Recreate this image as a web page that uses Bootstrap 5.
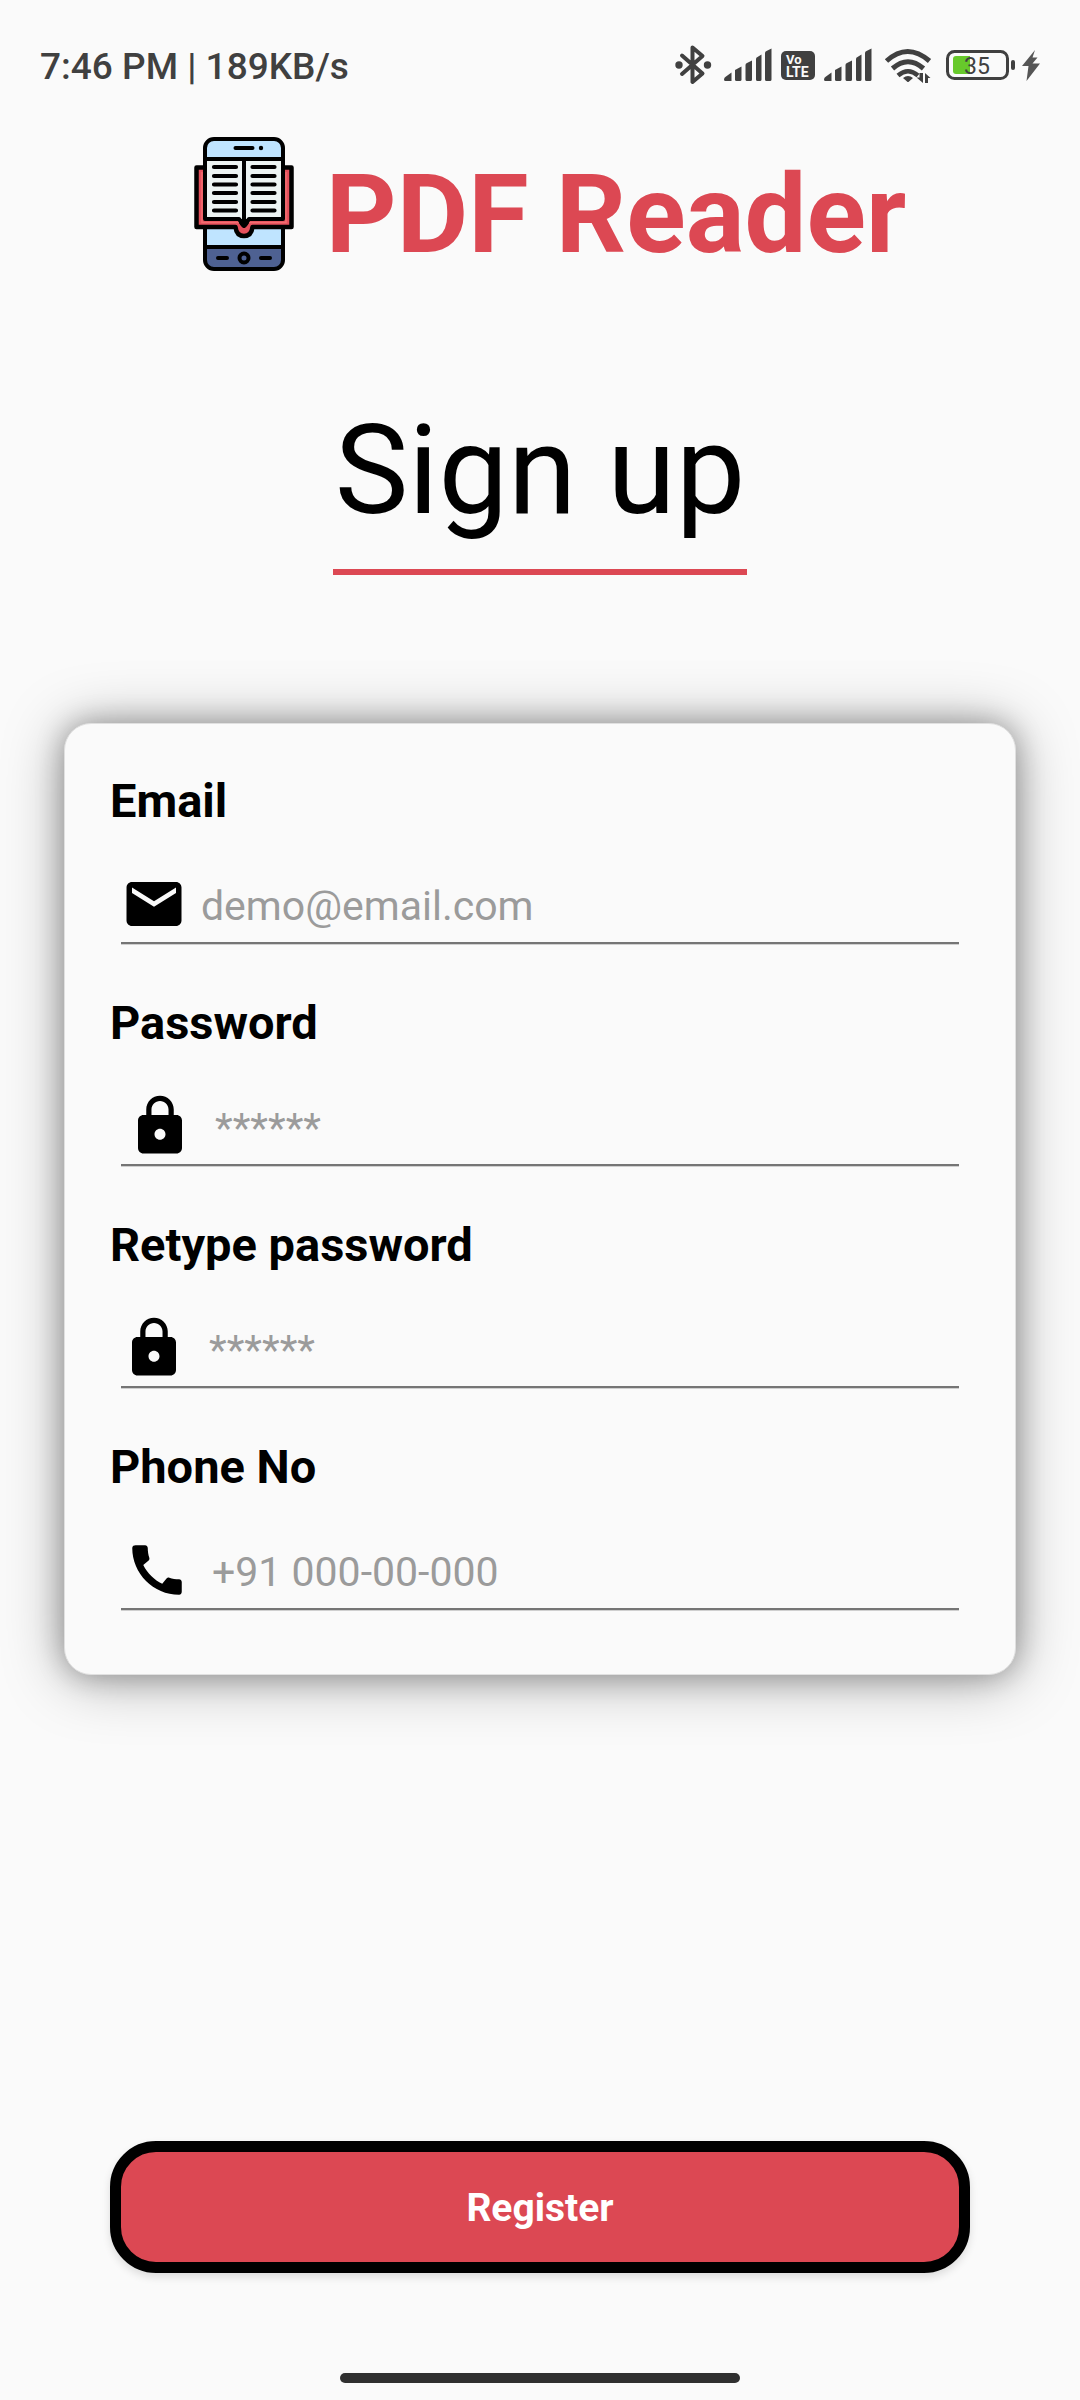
<!DOCTYPE html>
<html lang="en">
<head>
<meta charset="utf-8">
<meta name="viewport" content="width=device-width, initial-scale=1">
<title>PDF Reader – Sign up</title>
<link href="https://cdn.jsdelivr.net/npm/bootstrap@5.3.0/dist/css/bootstrap.min.css" rel="stylesheet">
<style>
  :root { --brand: #dc4853; --page: #fafafa; --ink: #404040; }
  body { background: var(--page); color: #000; font-family: Roboto, "Liberation Sans", sans-serif; }

  .status-bar { height: 128px; padding: 2px 38px 0 40px; color: var(--ink); }
  .status-time { font-size: 37px; line-height: 44px; font-weight: 500; padding-top: 3px; }
  .status-bar svg { display: block; }

  .brand-row { margin-top: 9px; gap: 15px; padding-left: 3px; }
  .brand-name { font-size: 110px; line-height: 134px; font-weight: 700; color: var(--brand); padding-top: 11px; }

  .page-title { margin: 116px 0 148px; }
  .page-title h2 { font-size: 124px; line-height: 146px; font-weight: 400; padding: 0 2px 25px; border-bottom: 6px solid var(--brand); }

  .form-card { margin: 0 64px; padding: 49px 56px 64px 45px; background: var(--page); border: 1px solid #e0e0e0; border-radius: 27px;
    box-shadow: 0 0 28px rgba(0, 0, 0, .28), 0 4px 60px rgba(0, 0, 0, .34); }
  .field + .field { margin-top: 51px; }
  .field label { font-size: 47px; line-height: 55px; font-weight: 700; margin-bottom: 43px; }
  .field-line { margin-left: 11px; padding-bottom: 5px; border-bottom: 2px solid #757575; box-shadow: 0 1px 0 #cfcfcf; gap: 22px; }
  .field-line svg { width: 66px; height: 66px; flex: none; }
  .field-line.tight { gap: 14px; }
  .field-line.inset { padding-left: 6px; }
  .field-line.phone { padding-left: 3px; }
  .field-line .form-control { padding: 3px 0 0; border: 0; border-radius: 0; background: transparent; font-size: 41px; line-height: 50px; height: 66px; color: #000; }
  .field-line .form-control:focus { box-shadow: none; }
  .field-line .form-control::placeholder { color: #9b9b9b; opacity: 1; }

  .register { margin: 0 110px 100px; padding: 8px 12px 6px; height: 132px; border: 11px solid #000; border-radius: 46px; background: var(--brand); color: #fff;
    font-size: 39px; line-height: 46px; font-weight: 700; box-shadow: 0 4px 8px rgba(0, 0, 0, .12); }
  .register:hover { background: #c93c47; border-color: #000; color: #fff; }
  .home-bar { width: 400px; height: 10px; border-radius: 5px; background: #303030; margin-bottom: 17px; }
</style>
</head>
<body class="d-flex flex-column min-vh-100">

<header class="status-bar d-flex align-items-center justify-content-between">
  <span class="status-time">7:46 PM | 189KB/s</span>
  <svg width="370" height="50" viewBox="672 39 370 50" fill="#404040" aria-hidden="true">
    <!-- bluetooth -->
    <path d="M682 54.500 702.500 72.500 692.500 81V46.500L702.500 55 682 73" fill="none" stroke="#404040" stroke-width="4" stroke-linejoin="round" stroke-linecap="round"/>
    <circle cx="679" cy="64" r="3.700"/><circle cx="707.500" cy="64" r="3.700"/>
    <!-- signal, first SIM -->
    <g id="bars">
      <path d="M724 78.500q0-2 2-3l5.500-4V80h-6q-1.500 0-1.500-1.500z"/>
      <path d="M735 69l6.500-3.500v13q0 1.500-1.500 1.500h-3.500q-1.500 0-1.500-1.500z"/>
      <path d="M745.500 64q0-1.500 1.500-2l5-2.500v19q0 1.500-1.500 1.500H747q-1.500 0-1.500-1.500z"/>
      <path d="M756 58q0-1.500 1.500-2l4-2.500v25q0 1.500-1.500 1.500h-2.500q-1.500 0-1.500-1.500z"/>
      <path d="M765 52q0-1.500 1.500-2l5-2.500v31q0 1.500-1.500 1.500h-3.500q-1.500 0-1.500-1.500z"/>
    </g>
    <rect x="781" y="50" width="34" height="29" rx="5"/>
    <text x="786" y="63" font-size="13" font-weight="700" fill="#fafafa">Vo</text>
    <text x="786" y="76" font-size="14" font-weight="700" fill="#fafafa">LTE</text>
    <!-- signal, second SIM -->
    <use href="#bars" x="100"/>
    <!-- wifi -->
    <g fill="none" stroke="#404040" stroke-width="5">
      <path d="M886.500 60Q907.500 41 929.500 60"/>
      <path d="M892.500 67.500Q908 54 923.500 67.500"/>
      <path d="M898 74.500Q908 66 918 74.500" stroke-width="4.500"/>
    </g>
    <path d="M903 77q5-4 10 0l-4 3.500q-1 1-2 0z"/>
    <path d="M923 72v10l-6.500-5.500h3v-4.500zM925 82v-10l5.500 5h-2.500v5z"/>
    <!-- battery -->
    <rect x="947.500" y="50.500" width="60" height="27" rx="7" fill="none" stroke="#404040" stroke-width="3"/>
    <path d="M956 55h14v18h-14q-3 0-3-3V58q0-3 3-3z" fill="#67c92b"/>
    <rect x="1011" y="59" width="4" height="10" rx="2"/>
    <text x="964" y="73" font-size="23">35</text>
    <path d="M1035 49 1022 65h6.500L1026.500 80 1040 62.500h-7.500l5-6h-5z" fill="#555"/>
  </svg>
</header>

<main class="d-flex flex-column flex-grow-1">
  <div class="brand-row d-flex justify-content-center align-items-start">
    <svg width="134" height="134" viewBox="177 137 134 134" role="img" aria-label="PDF Reader logo">
      <rect x="205" y="139" width="78" height="130" rx="9" fill="#bfe4ff"/>
      <path d="M205 247h78v13q0 9-9 9h-60q-9 0-9-9z" fill="#4e6192"/>
      <path d="M205 247h78" stroke="#000" stroke-width="4"/>
      <rect x="205" y="139" width="78" height="130" rx="9" fill="none" stroke="#000" stroke-width="4"/>
      <path d="M235.500 148h17" stroke="#000" stroke-width="4" stroke-linecap="round"/>
      <circle cx="261" cy="148" r="2.200"/>
      <path d="M196.500 167.500h95v59.500h-39q-1 9-8.500 9t-8.500-9h-39z" fill="#e5505c" stroke="#000" stroke-width="4.500" stroke-linejoin="round"/>
      <path d="M202 172v50.500h37M286 172v50.500h-37" fill="none" stroke="#f26d70" stroke-width="1.500"/>
      <path d="M205 159h78v60h-34l-5 7-5-7h-34z" fill="#edf4f3" stroke="#000" stroke-width="4" stroke-linejoin="round"/>
      <path d="M239 219h10v4q-5 9-10 0z"/>
      <path d="M244 159v60" stroke="#000" stroke-width="4"/>
      <path d="M214 167h22M214 176h22M214 184.500h22M214 193h22M214 202h22M214 210.500h22M252.500 167h22M252.500 176h22M252.500 184.500h22M252.500 193h22M252.500 202h22M252.500 210.500h22" stroke="#000" stroke-width="4.200" stroke-linecap="round"/>
      <circle cx="244" cy="258" r="4.500" fill="#4e6192" stroke="#000" stroke-width="4"/>
      <path d="M218 258h9M261 258h9" stroke="#000" stroke-width="4" stroke-linecap="round"/>
    </svg>
    <h1 class="brand-name mb-0">PDF Reader</h1>
  </div>

  <div class="page-title d-flex justify-content-center">
    <h2 class="mb-0">Sign up</h2>
  </div>

  <form id="signup" class="form-card">
    <div class="field">
      <label class="d-block" for="email">Email</label>
      <div class="field-line tight d-flex align-items-center">
        <svg viewBox="0 0 24 24" aria-hidden="true"><path d="M20 4H4c-1.100 0-1.990.9-1.990 2L2 18c0 1.100.9 2 2 2h16c1.100 0 2-.9 2-2V6c0-1.100-.9-2-2-2zm0 4l-8 5-8-5V6l8 5 8-5v2z"/></svg>
        <input class="form-control" type="email" id="email" placeholder="demo@email.com">
      </div>
    </div>
    <div class="field">
      <label class="d-block" for="password">Password</label>
      <div class="field-line inset d-flex align-items-center">
        <svg viewBox="0 0 24 24" aria-hidden="true"><path d="M18 8h-1V6c0-2.760-2.240-5-5-5S7 3.240 7 6v2H6c-1.100 0-2 .9-2 2v10c0 1.100.9 2 2 2h12c1.100 0 2-.9 2-2V10c0-1.100-.9-2-2-2zm-6 9c-1.100 0-2-.9-2-2s.9-2 2-2 2 .9 2 2-.9 2-2 2zm3.100-9H8.900V6c0-1.710 1.390-3.100 3.100-3.100 1.710 0 3.100 1.390 3.100 3.100v2z"/></svg>
        <input class="form-control" type="password" id="password" placeholder="******">
      </div>
    </div>
    <div class="field">
      <label class="d-block" for="retype">Retype password</label>
      <div class="field-line d-flex align-items-center">
        <svg viewBox="0 0 24 24" aria-hidden="true"><path d="M18 8h-1V6c0-2.760-2.240-5-5-5S7 3.240 7 6v2H6c-1.100 0-2 .9-2 2v10c0 1.100.9 2 2 2h12c1.100 0 2-.9 2-2V10c0-1.100-.9-2-2-2zm-6 9c-1.100 0-2-.9-2-2s.9-2 2-2 2 .9 2 2-.9 2-2 2zm3.100-9H8.900V6c0-1.710 1.390-3.100 3.100-3.100 1.710 0 3.100 1.390 3.100 3.100v2z"/></svg>
        <input class="form-control" type="password" id="retype" placeholder="******">
      </div>
    </div>
    <div class="field">
      <label class="d-block" for="phone">Phone No</label>
      <div class="field-line phone d-flex align-items-center">
        <svg viewBox="0 0 24 24" aria-hidden="true"><path d="M20.010 15.380c-1.230 0-2.420-.2-3.530-.56-.35-.12-.74-.03-1.010.24l-1.570 1.970c-2.830-1.350-5.480-3.900-6.890-6.830l1.950-1.660c.27-.28.35-.67.24-1.020-.37-1.110-.56-2.300-.56-3.530 0-.54-.45-.99-.99-.99H4.190C3.650 3 3 3.240 3 3.990 3 13.280 10.730 21 20.010 21c.71 0 .99-.63.99-1.180v-3.450c0-.54-.45-.99-.99-.99z"/></svg>
        <input class="form-control" type="tel" id="phone" placeholder="+91 000-00-000">
      </div>
    </div>
  </form>

  <button class="register btn mt-auto" type="submit" form="signup">Register</button>
</main>

<footer class="home-bar mx-auto"></footer>

<script src="https://cdn.jsdelivr.net/npm/bootstrap@5.3.0/dist/js/bootstrap.bundle.min.js"></script>
</body>
</html>
